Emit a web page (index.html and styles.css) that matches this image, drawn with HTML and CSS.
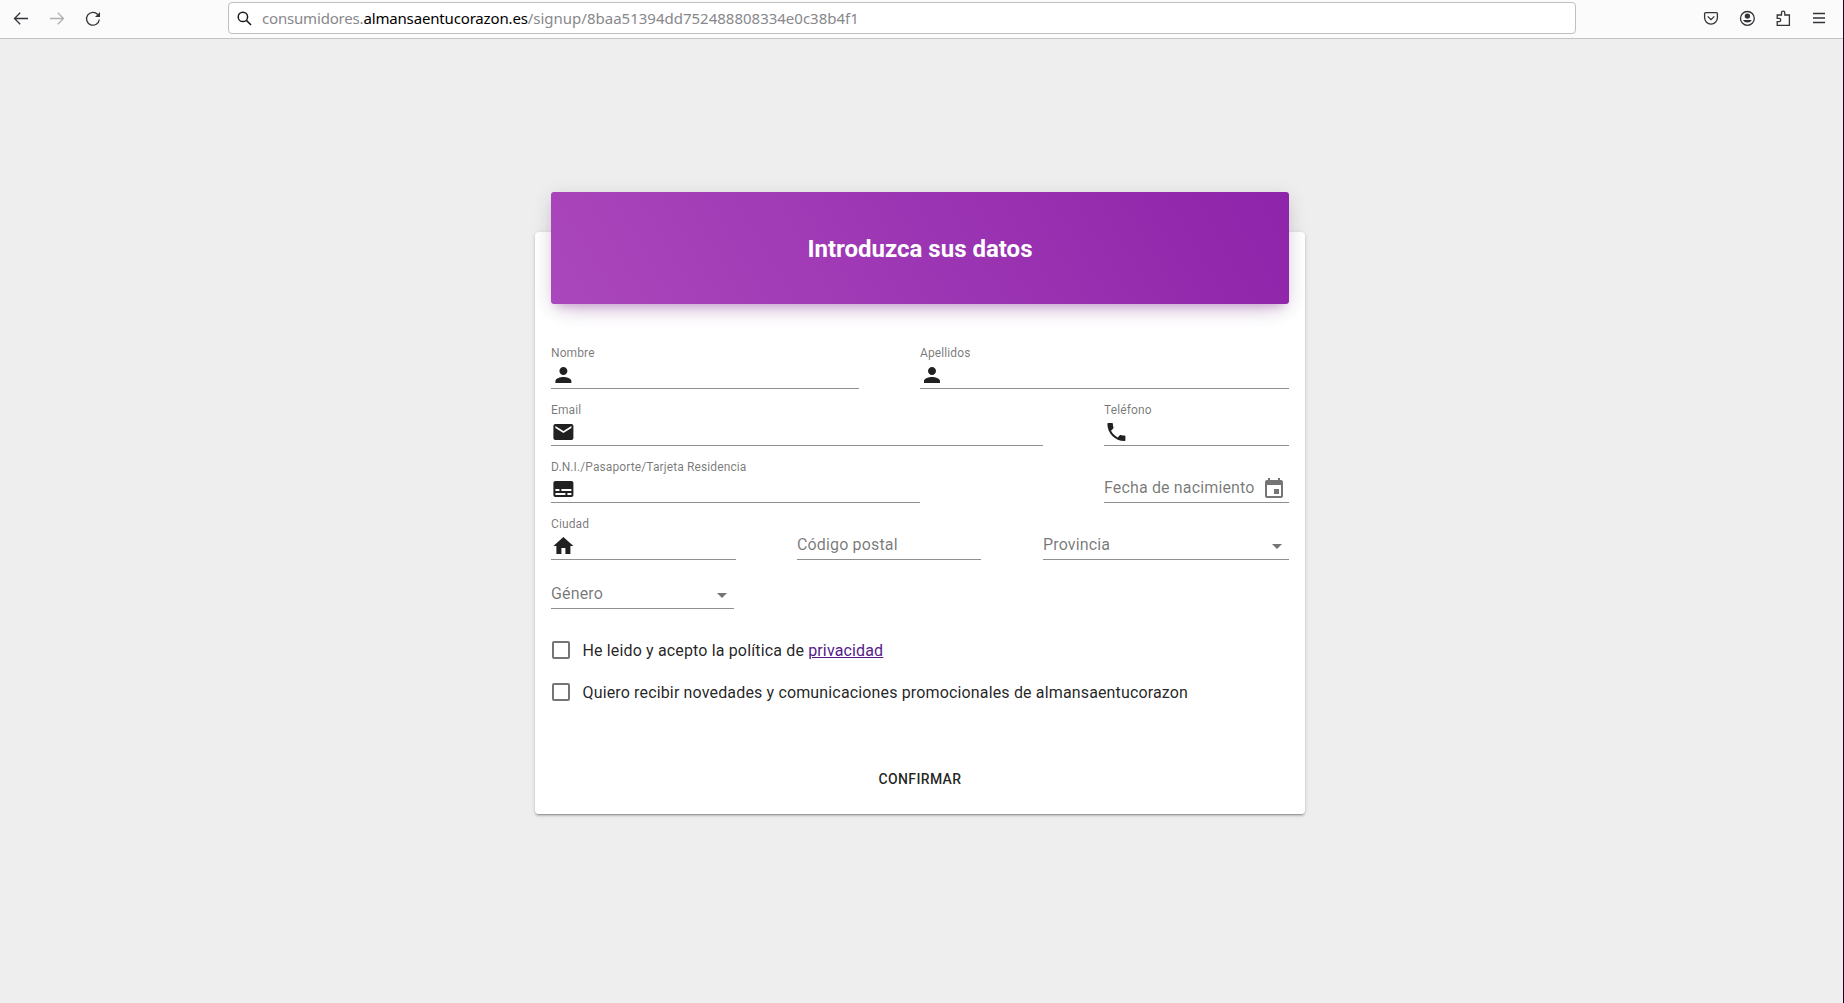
FILE: index.html
```html
<!DOCTYPE html>
<html lang="es">
<head>
<meta charset="utf-8">
<title>Introduzca sus datos</title>
<link rel="stylesheet" href="styles.css">
</head>
<body>
<div class="window">
  <header class="toolbar">
    <nav class="nav">
      <svg class="tool" viewBox="0 0 16 16"><path d="M15 8.500H1.700M7.200 2.800L1.500 8.500l5.700 5.700"/></svg>
      <svg class="tool tool-off" viewBox="0 0 16 16"><path d="M1 8.500h13.300M8.800 2.800L14.500 8.500l-5.700 5.700"/></svg>
      <svg class="tool" viewBox="0 0 16 16"><path d="M14.300 9.500A6.400 6.400 0 1 1 12.700 4.500"/><path class="solid" d="M15 2v5H10z"/></svg>
    </nav>
    <div class="urlbar">
      <svg class="search" viewBox="0 0 16 16"><circle cx="6.300" cy="6.300" r="5"/><path d="M10 10l5 5"/></svg>
      <p class="url"><span class="sub">consumidores.</span><span class="domain">almansaentucorazon.es</span><span class="path">/signup/8baa51394dd752488808334e0c38b4f1</span></p>
    </div>
    <div class="actions">
      <svg class="tool" viewBox="0 0 16 16"><path d="M2.600 2.600h10.800a1 1 0 0 1 1 1v4.100a6.400 6.400 0 0 1-12.800 0V3.600a1 1 0 0 1 1-1zM4.700 6.400L8 9.600 11.300 6.400"/></svg>
      <svg class="tool" viewBox="0 0 16 16"><circle cx="8.400" cy="8.400" r="6.900"/><circle class="solid" cx="8.400" cy="6.100" r="2.700"/><path class="solid" d="M4 10h8.800a4.700 4 0 0 1-8.800 0z"/></svg>
      <svg class="tool" viewBox="0 0 16 16"><path d="M2.200 5H6.500V2.700a1.600 1.600 0 0 1 3.300 0V5h4.600v10.300H2.200v-3.700h1.900a1.600 1.600 0 0 0 0-3.300H2.200z"/></svg>
      <svg class="tool" viewBox="0 0 16 16"><path d="M2 3.500h12M2 8h12M2 12.500h12"/></svg>
    </div>
  </header>

  <main class="page">
    <form class="card">
      <div class="banner"><h1>Introduzca sus datos</h1></div>
      <div class="fields">
        <div class="field span5">
          <label>Nombre</label>
          <svg class="icon" viewBox="-.4 0 24 24"><path d="M12 12c2.210 0 4-1.790 4-4s-1.790-4-4-4-4 1.790-4 4 1.790 4 4 4zm0 2c-2.670 0-8 1.340-8 4v2h16v-2c0-2.660-5.330-4-8-4z"/></svg>
        </div>
        <div class="field at7 span6">
          <label>Apellidos</label>
          <svg class="icon" viewBox="0 0 24 24"><path d="M12 12c2.210 0 4-1.790 4-4s-1.790-4-4-4-4 1.790-4 4 1.790 4 4 4zm0 2c-2.670 0-8 1.340-8 4v2h16v-2c0-2.660-5.330-4-8-4z"/></svg>
        </div>
        <div class="field at1 span8">
          <label>Email</label>
          <svg class="icon" viewBox="-.4 0 24 24"><path d="M20 4H4c-1.100 0-1.990.9-1.990 2L2 18c0 1.100.9 2 2 2h16c1.100 0 2-.9 2-2V6c0-1.100-.9-2-2-2zm0 4l-8 5-8-5V6l8 5 8-5v2z"/></svg>
        </div>
        <div class="field at10 span3">
          <label>Teléfono</label>
          <svg class="icon" viewBox="-.4 0 24 24"><path d="M6.620 10.790c1.440 2.830 3.760 5.140 6.590 6.590l2.200-2.200c.27-.27.67-.36 1.020-.24 1.120.37 2.330.57 3.570.57.55 0 1 .45 1 1V20c0 .55-.45 1-1 1-9.390 0-17-7.610-17-17 0-.55.45-1 1-1h3.500c.55 0 1 .45 1 1 0 1.250.2 2.450.57 3.570.11.35.03.74-.25 1.020l-2.200 2.200z"/></svg>
        </div>
        <div class="field at1 span6">
          <label>D.N.I./Pasaporte/Tarjeta Residencia</label>
          <svg class="icon" viewBox="-.4 0 24 24"><path d="M20 4H4c-1.100 0-2 .9-2 2v12c0 1.100.9 2 2 2h16c1.100 0 2-.9 2-2V6c0-1.100-.9-2-2-2zM4 12h4v2H4v-2zm10 6H4v-2h10v2zm6 0h-4v-2h4v2zm0-4H10v-2h10v2z"/></svg>
        </div>
        <div class="field at10 span3 row">
          <span class="hint">Fecha de nacimiento</span>
          <svg class="icon calendar" viewBox="0 0 24 24"><path d="M17 12h-5v5h5v-5zM16 1v2H8V1H6v2H5c-1.110 0-1.990.9-1.990 2L3 19c0 1.100.89 2 2 2h14c1.100 0 2-.9 2-2V5c0-1.100-.9-2-2-2h-1V1h-2zm3 18H5V8h14v11z"/></svg>
        </div>
        <div class="field at1 span3">
          <label>Ciudad</label>
          <svg class="icon" viewBox="-.4 0 24 24"><path d="M10 20v-6h4v6h5v-8h3L12 3 2 12h3v8z"/></svg>
        </div>
        <div class="field at5 span3 row"><span class="hint">Código postal</span></div>
        <div class="field at9 span4 row"><span class="hint">Provincia</span><i class="arrow"></i></div>
        <div class="field at1 span3 row gender"><span class="hint">Género</span><i class="arrow"></i></div>
      </div>
      <div class="checks">
        <div class="check"><i class="box"></i><span>He leido y acepto la política de <a href="#">privacidad</a></span></div>
        <div class="check"><i class="box"></i><span>Quiero recibir novedades y comunicaciones promocionales de almansaentucorazon</span></div>
      </div>
      <button class="confirm" type="button">CONFIRMAR</button>
    </form>
  </main>
</div>
</body>
</html>
```
FILE: styles.css
```css
* { box-sizing: border-box; }
body { margin: 0; font-family: Roboto, sans-serif; color: rgba(0,0,0,.87); }
.window {
  height: 1003px;
  display: flex;
  flex-direction: column;
  border-right: 1px solid #2c001e;
  background: #eee;
  overflow: hidden;
}

.toolbar {
  flex: none;
  height: 39px;
  display: flex;
  justify-content: space-between;
  background: #fbfbfb;
  border-bottom: 1px solid #c4c4c4;
}
.nav, .actions { display: flex; gap: 20px; padding-top: 10px; }
.nav { width: 228px; padding-left: 13px; }
.actions { width: 267px; padding-left: 127px; }
.tool { width: 16px; height: 16px; overflow: visible; }
.tool, .search { fill: none; stroke: #333338; stroke-width: 1.3; flex: none; }
.tool-off { stroke: #b0b0b2; }
.tool .solid { fill: #333338; stroke: none; }
.urlbar {
  flex: 1;
  height: 32px;
  margin-top: 2px;
  padding-left: 8px;
  display: flex;
  align-items: center;
  background: #fff;
  border: 1px solid #bfbfc0;
  border-radius: 4px;
}
.search { width: 15px; height: 15px; stroke: #1c1c20; stroke-width: 1.6; overflow: visible; }
.url {
  margin: 0 0 0 10px;
  font: 15px/20px "Noto Sans", sans-serif;
  color: #88888b;
  display: flex;
  white-space: nowrap;
}
.sub { letter-spacing: -.18px; }
.domain { color: #000; letter-spacing: -.16px; }

.page { flex: 1; padding: 193px 0 0 535px; }
.card {
  width: 770px;
  height: 582px;
  padding: 0 16px;
  display: flex;
  flex-direction: column;
  background: #fff;
  border-radius: 4px;
  box-shadow: 0 3px 1px -2px rgba(0,0,0,.2), 0 2px 2px 0 rgba(0,0,0,.14), 0 1px 5px 0 rgba(0,0,0,.12);
}
.banner {
  flex: none;
  height: 112px;
  margin-top: -40px;
  padding-top: 2px;
  display: flex;
  align-items: center;
  justify-content: center;
  color: #fff;
  border-radius: 3px;
  background: linear-gradient(60deg, #ab47bc, #8e24aa);
  box-shadow: 0 12px 20px -10px rgba(156,39,176,.28), 0 4px 20px 0 rgba(0,0,0,.12), 0 7px 8px -5px rgba(156,39,176,.2);
}
h1 { margin: 0; font-size: 24px; line-height: 32px; font-weight: 700; }

.fields {
  margin-top: 28px;
  display: grid;
  grid-template-columns: repeat(12, 1fr);
  grid-template-rows: repeat(4, 57px) 49px;
}
.field {
  border-bottom: 1px solid #8f8f8f;
  display: flex;
  flex-direction: column;
  justify-content: flex-end;
  padding-bottom: 1px;
  font-size: 16px;
}
.field label { font-size: 12px; line-height: 14px; letter-spacing: .11px; color: rgba(0,0,0,.54); margin-bottom: 3px; white-space: nowrap; }
.icon { width: 24px; height: 24px; fill: #212121; flex: none; }
.row { flex-direction: row; align-items: flex-end; justify-content: space-between; }
.hint { line-height: 20px; letter-spacing: .15px; padding-bottom: 3px; color: rgba(0,0,0,.54); white-space: nowrap; }
.calendar { fill: #757575; margin: 0 3px 0 0; }
.arrow { border: 5px solid transparent; border-top-color: #757575; border-bottom: 0; margin: 0 7px 9px 0; }
.gender { width: 183px; }
.at1 { grid-column-start: 1; }
.at5 { grid-column-start: 5; margin-right: .6px; }
.at7 { grid-column-start: 7; }
.at9 { grid-column-start: 9; }
.at10 { grid-column-start: 10; margin-left: -.5px; }
.span3 { grid-column-end: span 3; }
.span4 { grid-column-end: span 4; }
.span5 { grid-column-end: span 5; }
.span6 { grid-column-end: span 6; }
.span8 { grid-column-end: span 8; }

.checks { margin-top: 29px; padding-left: 1px; }
.check { height: 24px; margin-bottom: 18px; display: flex; align-items: center; gap: 12.5px; font-size: 16px; line-height: 24px; letter-spacing: .15px; white-space: nowrap; }
.check span { padding-top: 2px; }
.box { width: 18px; height: 18px; border: 2px solid #757575; border-radius: 2px; }
.check a { color: #551a8b; }
.confirm {
  align-self: center;
  margin: 39px 0 0;
  padding: 0 16px;
  height: 36px;
  border: 0;
  background: none;
  color: inherit;
  font: 500 14px/36px Roboto, sans-serif;
  letter-spacing: .35px;
}
```
